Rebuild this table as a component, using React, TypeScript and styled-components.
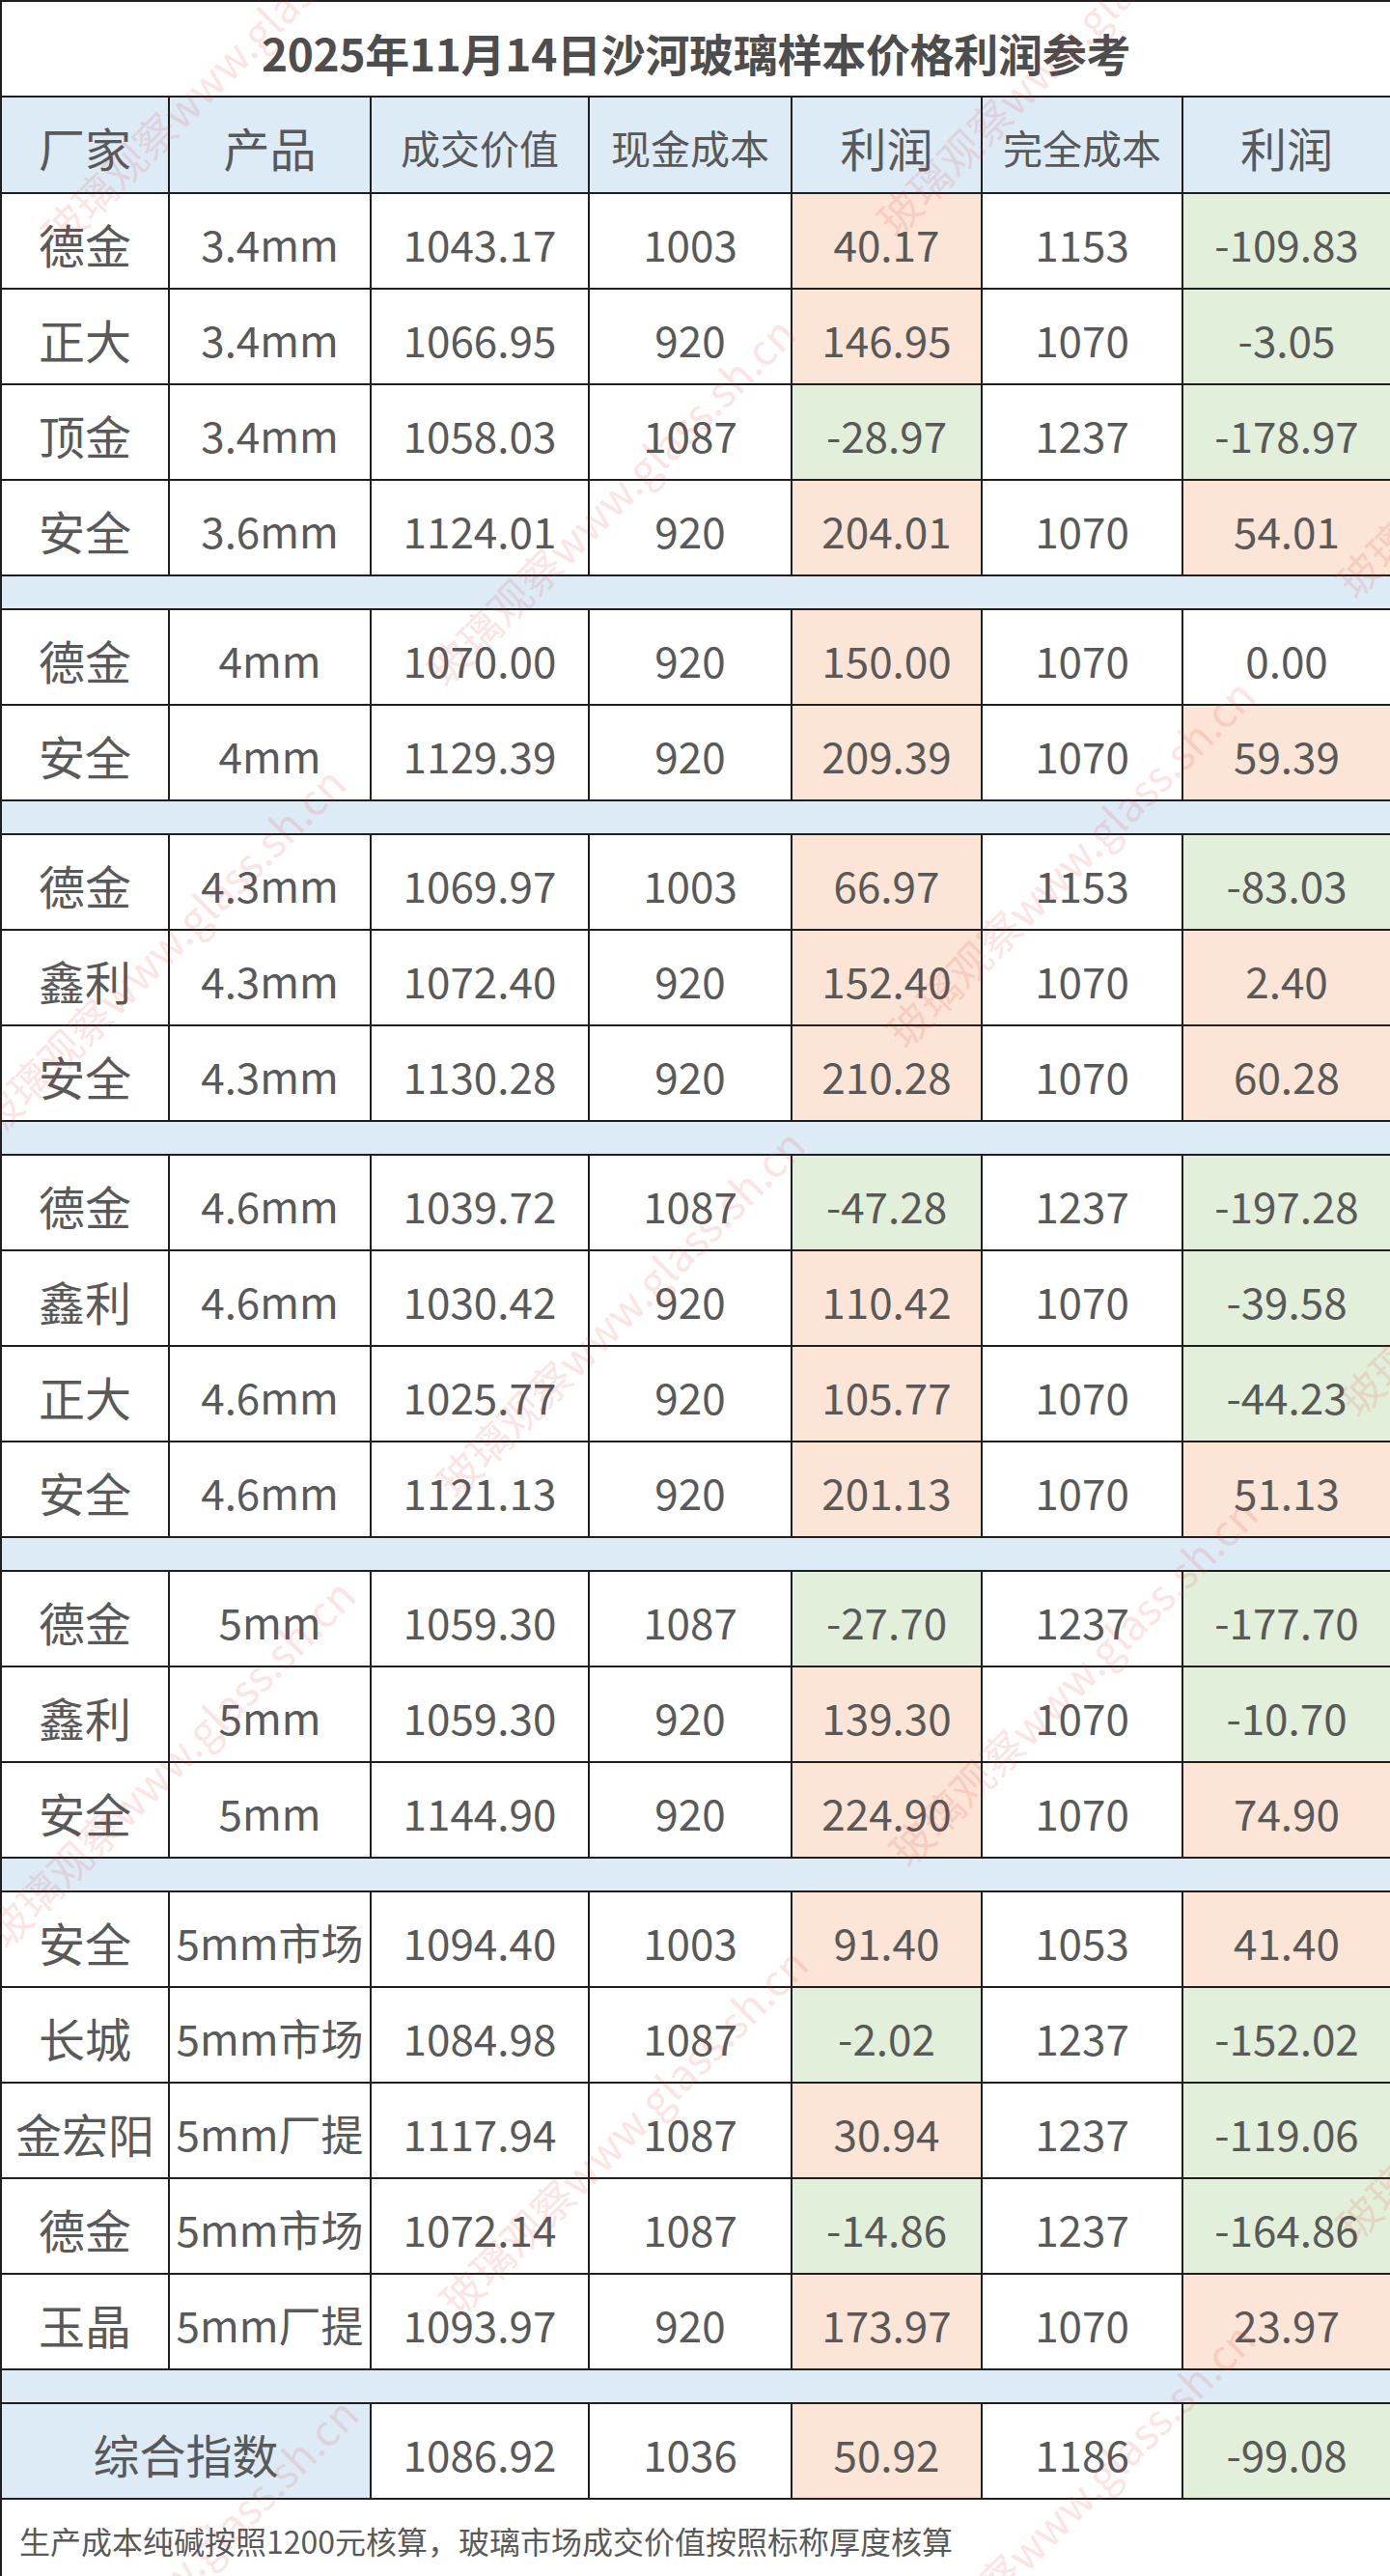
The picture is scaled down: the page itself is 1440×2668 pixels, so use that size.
import React from 'react';
import styled, { createGlobalStyle } from 'styled-components';

type Tone = 'plain' | 'pink' | 'green' | 'blue';

type Row = [string, string, string, string, string, string, string];

const tones: Record<Tone, string> = {
  plain: '#ffffff',
  pink: '#fce4d6',
  green: '#e2efda',
  blue: '#ddebf7',
};

const columns = [174, 209, 226, 210, 197, 208, 216];

const groups: Row[][] = [
  [
    ['德金', '3.4mm', '1043.17', '1003', '40.17', '1153', '-109.83'],
    ['正大', '3.4mm', '1066.95', '920', '146.95', '1070', '-3.05'],
    ['顶金', '3.4mm', '1058.03', '1087', '-28.97', '1237', '-178.97'],
    ['安全', '3.6mm', '1124.01', '920', '204.01', '1070', '54.01'],
  ],
  [
    ['德金', '4mm', '1070.00', '920', '150.00', '1070', '0.00'],
    ['安全', '4mm', '1129.39', '920', '209.39', '1070', '59.39'],
  ],
  [
    ['德金', '4.3mm', '1069.97', '1003', '66.97', '1153', '-83.03'],
    ['鑫利', '4.3mm', '1072.40', '920', '152.40', '1070', '2.40'],
    ['安全', '4.3mm', '1130.28', '920', '210.28', '1070', '60.28'],
  ],
  [
    ['德金', '4.6mm', '1039.72', '1087', '-47.28', '1237', '-197.28'],
    ['鑫利', '4.6mm', '1030.42', '920', '110.42', '1070', '-39.58'],
    ['正大', '4.6mm', '1025.77', '920', '105.77', '1070', '-44.23'],
    ['安全', '4.6mm', '1121.13', '920', '201.13', '1070', '51.13'],
  ],
  [
    ['德金', '5mm', '1059.30', '1087', '-27.70', '1237', '-177.70'],
    ['鑫利', '5mm', '1059.30', '920', '139.30', '1070', '-10.70'],
    ['安全', '5mm', '1144.90', '920', '224.90', '1070', '74.90'],
  ],
  [
    ['安全', '5mm市场', '1094.40', '1003', '91.40', '1053', '41.40'],
    ['长城', '5mm市场', '1084.98', '1087', '-2.02', '1237', '-152.02'],
    ['金宏阳', '5mm厂提', '1117.94', '1087', '30.94', '1237', '-119.06'],
    ['德金', '5mm市场', '1072.14', '1087', '-14.86', '1237', '-164.86'],
    ['玉晶', '5mm厂提', '1093.97', '920', '173.97', '1070', '23.97'],
  ],
];

const headers = ['厂家', '产品', '成交价值', '现金成本', '利润', '完全成本', '利润'];

// 水印条带：x + y = c，起点相位
const stripes = [
  { c: 298, start: 50 },
  { c: 1149, start: 449 },
  { c: 2000, start: 459 },
  { c: 2851, start: 462 },
  { c: 3702, start: 459 },
];
const MARK_STEP = 466;

const GlobalStyle = createGlobalStyle`
  html, body {
    margin: 0;
    padding: 0;
    background: #fff;
  }
  body {
    font-family: 'Noto Sans CJK SC', 'Noto Sans', sans-serif;
  }
`;

const Page = styled.div`
  position: relative;
  width: 1440px;
  height: 2668px;
  overflow: hidden;
  background: #fff;
`;

const Sheet = styled.table`
  width: 1440px;
  border-collapse: collapse;
  table-layout: fixed;
  color: #595959;
`;

const Line = styled.tr<{ $h: number }>`
  height: ${(p) => p.$h}px;
`;

const Cell = styled.td<{ $tone?: Tone; $size?: number }>`
  border: 2px solid #1f1f1f;
  padding: 6px 0 0;
  text-align: center;
  vertical-align: middle;
  white-space: nowrap;
  font-size: ${(p) => p.$size ?? 44}px;
  line-height: 1.2;
  background: ${(p) => tones[p.$tone ?? 'plain']};
`;

const TitleCell = styled.td`
  border: 2px solid #1f1f1f;
  padding: 6px 0 0;
  text-align: center;
  font-size: 46px;
  font-weight: 700;
  color: #4d4d4d;
  letter-spacing: -0.3px;
`;

const Spacer = styled.td`
  border: 2px solid #1f1f1f;
  background: ${tones.blue};
  padding: 0;
`;

const NoteCell = styled.td`
  border: 2px solid #1f1f1f;
  padding: 4px 0 0 18px;
  text-align: left;
  font-size: 32px;
  color: #595959;
`;

const Overlay = styled.div`
  position: absolute;
  inset: 0;
  pointer-events: none;
  overflow: hidden;
`;

const Mark = styled.span`
  position: absolute;
  white-space: nowrap;
  font-size: 44px;
  line-height: 1;
  color: rgba(235, 40, 40, 0.15);
  transform-origin: 0 50%;
  transform: rotate(-45deg);
`;

const toneOf = (v: string): Tone => {
  const n = parseFloat(v);
  if (n > 0) return 'pink';
  if (n < 0) return 'green';
  return 'plain';
};

const DataRow: React.FC<{ row: Row }> = ({ row }) => {
  const [maker, product, deal, cash, profit, full, net] = row;
  return (
    <Line $h={99}>
      <Cell $size={48}>{maker}</Cell>
      <Cell $size={product.length > 5 ? 35 : 44}>{product}</Cell>
      <Cell>{deal}</Cell>
      <Cell>{cash}</Cell>
      <Cell $tone={toneOf(profit)}>{profit}</Cell>
      <Cell>{full}</Cell>
      <Cell $tone={toneOf(net)}>{net}</Cell>
    </Line>
  );
};

const Watermark: React.FC = () => {
  const marks: { x: number; y: number }[] = [];
  stripes.forEach(({ c, start }) => {
    for (let x = start - MARK_STEP * 8; x < 1440; x += MARK_STEP) {
      const y = c - x;
      if (x + 420 < 0 || y - 420 > 2668 || y < -10) continue;
      marks.push({ x, y });
    }
  });
  return (
    <Overlay>
      {marks.map((m, i) => (
        <Mark key={i} style={{ left: m.x, top: m.y - 22 }}>
          玻璃观察www.glass.sh.cn
        </Mark>
      ))}
    </Overlay>
  );
};

const App: React.FC = () => {
  return (
    <Page>
      <GlobalStyle />
      <Sheet>
        <colgroup>
          {columns.map((w, i) => (
            <col key={i} style={{ width: w }} />
          ))}
        </colgroup>
        <tbody>
          <Line $h={99}>
            <TitleCell colSpan={7}>2025年11月14日沙河玻璃样本价格利润参考</TitleCell>
          </Line>
          <Line $h={100}>
            {headers.map((h, i) => (
              <Cell key={i} $tone="blue" $size={h.length > 2 ? 41 : 48}>
                {h}
              </Cell>
            ))}
          </Line>
          {groups.map((group, gi) => (
            <React.Fragment key={gi}>
              {group.map((row, ri) => (
                <DataRow key={ri} row={row} />
              ))}
              <Line $h={35}>
                <Spacer colSpan={7} />
              </Line>
            </React.Fragment>
          ))}
          <Line $h={99}>
            <Cell colSpan={2} $tone="blue" $size={48}>
              综合指数
            </Cell>
            <Cell>1086.92</Cell>
            <Cell>1036</Cell>
            <Cell $tone="pink">50.92</Cell>
            <Cell>1186</Cell>
            <Cell $tone="green">-99.08</Cell>
          </Line>
          <Line $h={81}>
            <NoteCell colSpan={7}>生产成本纯碱按照1200元核算，玻璃市场成交价值按照标称厚度核算</NoteCell>
          </Line>
        </tbody>
      </Sheet>
      <Watermark />
    </Page>
  );
};

export default App;
